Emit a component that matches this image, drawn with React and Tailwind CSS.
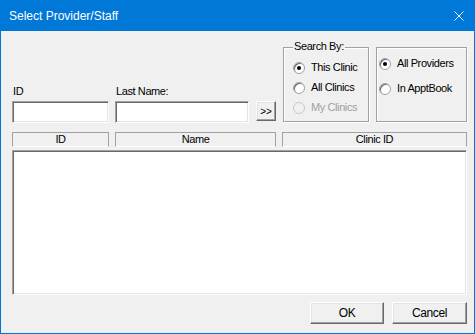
import React from "react";

const sunken =
  "bg-white border border-t-[#a0a0a0] border-l-[#a0a0a0] border-b-white border-r-white shadow-[inset_1px_1px_0_#696969,inset_-1px_-1px_0_#e3e3e3]";
const raised =
  "bg-[#f0f0f0] border border-t-white border-l-white border-b-[#696969] border-r-[#696969] shadow-[inset_-1px_-1px_0_#a0a0a0,inset_1px_1px_0_#e3e3e3]";
const etched =
  "border border-[#a0a0a0] shadow-[inset_1px_1px_0_#ffffff,1px_1px_0_#ffffff]";

function Radio({ checked, disabled, label }) {
  return (
    <div className="flex items-center h-[13px]">
      <div
        className={
          "w-[12px] h-[12px] rounded-full border flex items-center justify-center shrink-0 " +
          (disabled
            ? "bg-[#f0f0f0] border-[#c8c8c8]"
            : "bg-white border-[#a0a0a0] shadow-[inset_1px_1px_0_#696969]")
        }
      >
        {checked && <div className="w-[4px] h-[4px] rounded-full bg-black" />}
      </div>
      <span
        className={
          "ml-[6px] leading-[13px] " + (disabled ? "text-[#a0a0a0]" : "text-black")
        }
      >
        {label}
      </span>
    </div>
  );
}

export default function App() {
  return (
    <div
      className="w-[475px] h-[334px] flex flex-col text-[11px] tracking-[-0.4px] text-black select-none"
      style={{ fontFamily: '"Liberation Sans", Arial, sans-serif' }}
    >
      {/* Title bar */}
      <div className="h-[31px] bg-[#0078d7] flex items-center justify-between pl-[9px] pr-[11px] shrink-0">
        <span className="text-white text-[12px] tracking-normal">Select Provider/Staff</span>
        <svg width="10" height="10" viewBox="0 0 10 10">
          <path d="M0.5 0.5 L9.5 9.5 M9.5 0.5 L0.5 9.5" stroke="#ffffff" strokeWidth="1" />
        </svg>
      </div>

      {/* Body */}
      <div className="flex-1 bg-[#f0f0f0] border-l border-r border-b border-[#0078d7] flex flex-col pl-[11px] pr-[7px] pt-[16px] pb-[9px]">
        {/* Top row */}
        <div className="flex items-end h-[76px]">
          <div className="flex flex-col w-[97px]">
            <span className="leading-[13px] mb-[3px] ml-[1px]">ID</span>
            <div className={"h-[22px] " + sunken} />
          </div>
          <div className="flex flex-col w-[134px] ml-[6px]">
            <span className="leading-[13px] mb-[3px] ml-[1px]">Last Name:</span>
            <div className={"h-[22px] " + sunken} />
          </div>
          <div
            className={
              "w-[20px] h-[20px] ml-[7px] mb-[2px] flex items-center justify-center text-[10px] tracking-normal " +
              raised
            }
          >
            &gt;&gt;
          </div>

          {/* Search By group */}
          <div className={"relative w-[86px] h-[75px] ml-[7px] mb-[1px] " + etched}>
            <span className="absolute -top-[8px] left-[9px] px-[1px] bg-[#f0f0f0] leading-[13px]">
              Search By:
            </span>
            <div className="flex flex-col gap-[7px] pt-[13px] pl-[9px]">
              <Radio checked label="This Clinic" />
              <Radio label="All Clinics" />
              <Radio disabled label="My Clinics" />
            </div>
          </div>

          {/* Provider group */}
          <div className={"w-[91px] h-[75px] ml-[7px] mb-[1px] " + etched}>
            <div className="flex flex-col gap-[12px] pt-[9px] pl-[2px]">
              <Radio checked label="All Providers" />
              <Radio label="In ApptBook" />
            </div>
          </div>
        </div>

        {/* Column headers */}
        <div className="flex mt-[9px] h-[15px]">
          <div className="w-[97px] border border-[#a0a0a0] border-b-white flex items-center justify-center leading-[13px]">
            ID
          </div>
          <div className="w-[161px] ml-[6px] border border-[#a0a0a0] border-b-white flex items-center justify-center leading-[13px]">
            Name
          </div>
          <div className="w-[185px] ml-[6px] border border-[#a0a0a0] border-b-white flex items-center justify-center leading-[13px]">
            Clinic ID
          </div>
        </div>

        {/* List */}
        <div className={"mt-[3px] h-[145px] w-[455px] " + sunken} />

        {/* Buttons */}
        <div className="flex justify-end mt-[7px] gap-[8px]">
          <div className={"w-[74px] h-[22px] flex items-center justify-center text-[12px] " + raised}>
            OK
          </div>
          <div className={"w-[75px] h-[22px] flex items-center justify-center text-[12px] " + raised}>
            Cancel
          </div>
        </div>
      </div>
    </div>
  );
}
